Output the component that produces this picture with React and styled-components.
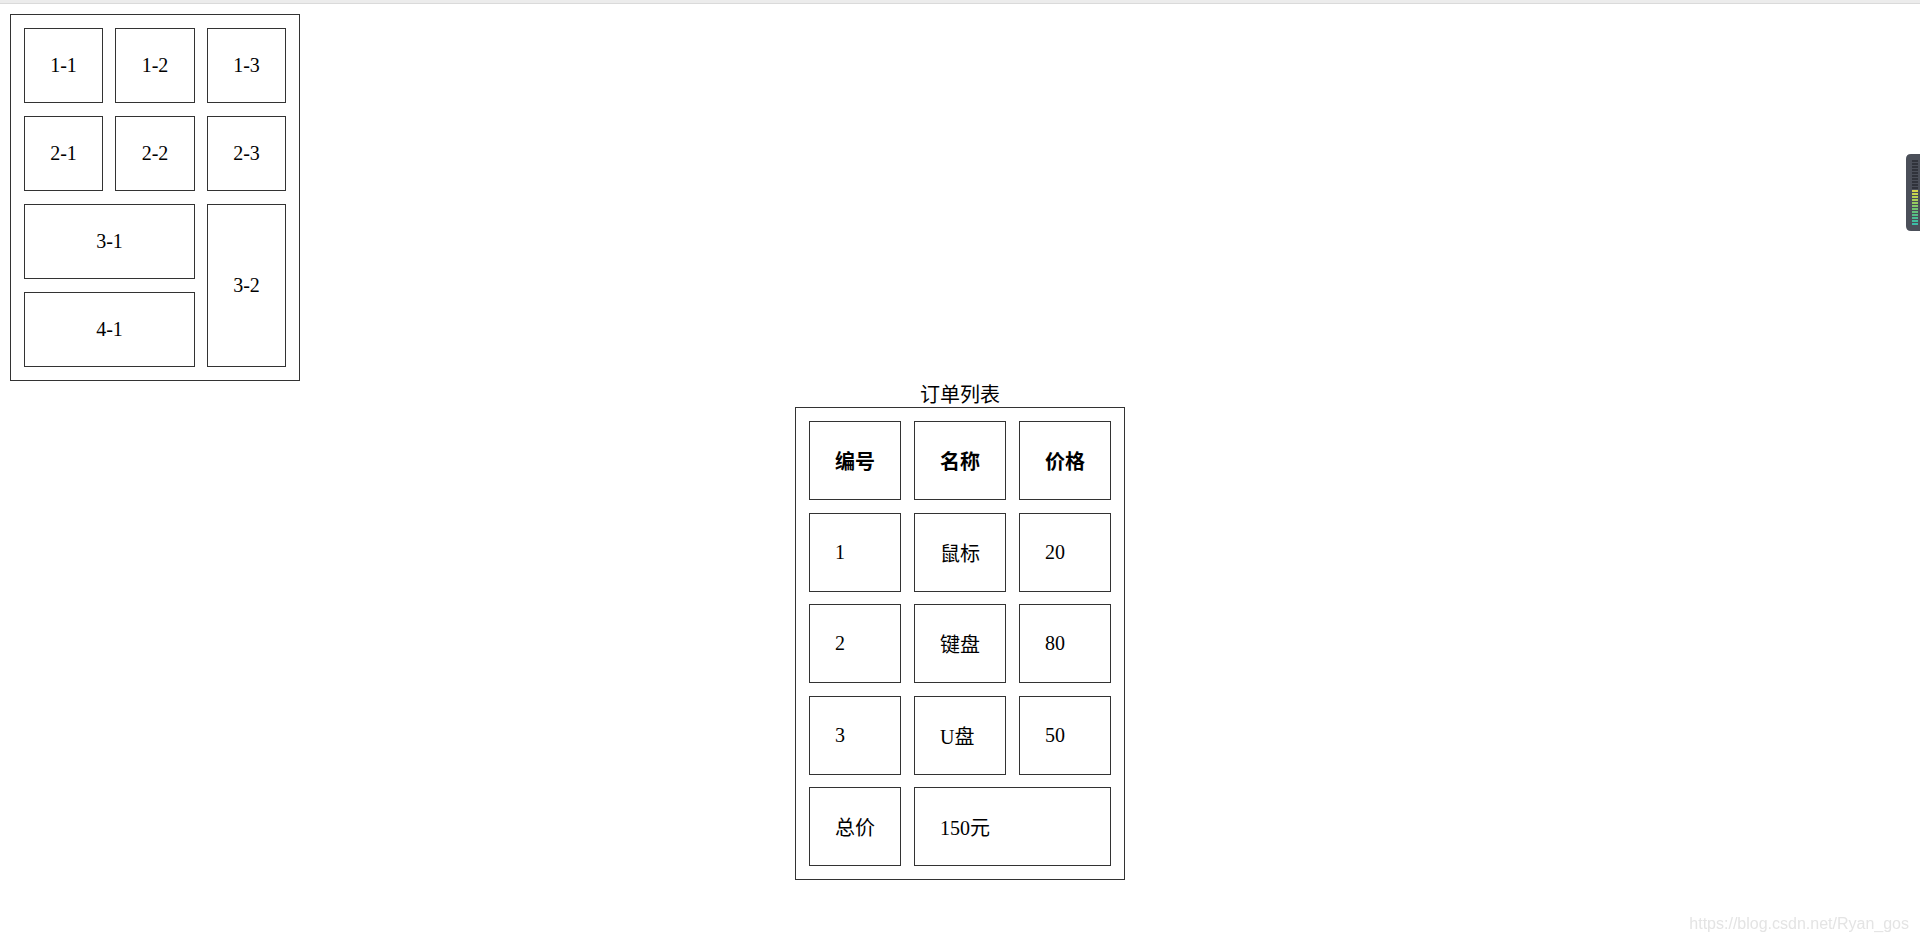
import React from 'react';
import styled, { createGlobalStyle } from 'styled-components';

const GlobalStyle = createGlobalStyle`
  html, body {
    margin: 0;
    background: #fff;
  }
  body {
    font-family: 'Liberation Serif', 'Noto Sans CJK SC', serif;
    color: #000;
  }
`;

// thin grey band left over from the browser chrome
const TopStrip = styled.div`
  height: 3px;
  background: #ececec;
  border-bottom: 1px solid #dadada;
`;

const Page = styled.div`
  padding: 10px;
`;

// first demo: cells merged across rows and columns
const LayoutTable = styled.div`
  display: grid;
  width: max-content;
  grid-template-columns: 79px 80px 79px;
  grid-auto-rows: 75px;
  gap: 13px 12px;
  padding: 13px;
  border: 1px solid #333;
`;

const LayoutCell = styled.div`
  display: flex;
  align-items: center;
  justify-content: center;
  border: 1px solid #333;
  font-size: 20px;
  grid-column: span ${(p) => p.$cols || 1};
  grid-row: span ${(p) => p.$rows || 1};
`;

// second demo: the order list
const OrderTable = styled.div`
  width: max-content;
  margin: 0 auto;
`;

const Caption = styled.div`
  text-align: center;
  font-family: 'Noto Sans CJK SC', sans-serif;
  font-size: 20px;
  line-height: 26px;
  height: 26px;
`;

const OrderGrid = styled.div`
  display: grid;
  grid-template-columns: 92px 92px 92px;
  grid-auto-rows: 79px;
  gap: 12.5px 13px;
  padding: 13px 13px 12.5px;
  border: 1px solid #333;
`;

const OrderCell = styled.div`
  display: flex;
  align-items: center;
  justify-content: ${(p) => (p.$head ? 'center' : 'flex-start')};
  padding-left: ${(p) => (p.$head ? '0' : '25px')};
  border: 1px solid #333;
  font-family: 'Liberation Serif', 'Noto Sans CJK SC', serif;
  font-size: 20px;
  font-weight: ${(p) => (p.$head ? 700 : 400)};
  grid-column: span ${(p) => p.$cols || 1};
`;

const Watermark = styled.div`
  position: fixed;
  right: 11px;
  bottom: 3px;
  font-family: 'Liberation Sans', Arial, sans-serif;
  font-size: 16px;
  color: #e4e4e4;
`;

const MeterDock = styled.div`
  position: fixed;
  top: 154px;
  right: 0;
  width: 14px;
  height: 77px;
`;

const meterColors = [
  '#d6d64a', '#c9d64e', '#b9d452', '#a8d158', '#96cd5f',
  '#84ca67', '#72c670', '#62c27b', '#55c086', '#4abe92',
  '#42bd9c', '#3cbca6',
];

const Meter = () => {
  const bars = [];
  for (let i = 0; i < 22; i++) {
    const y = 6 + i * 3;
    const fill = i < 10 ? '#30333b' : meterColors[i - 10];
    bars.push(<rect key={i} x="6" y={y} width="6" height="2" fill={fill} />);
  }
  return (
    <svg width="14" height="77" viewBox="0 0 14 77">
      <path d="M14 0 H5 Q0 0 0 5 V72 Q0 77 5 77 H14 Z" fill="#4b4f59" />
      {bars}
    </svg>
  );
};

const layoutCells = [
  { label: '1-1' }, { label: '1-2' }, { label: '1-3' },
  { label: '2-1' }, { label: '2-2' }, { label: '2-3' },
  { label: '3-1', cols: 2 }, { label: '3-2', rows: 2 },
  { label: '4-1', cols: 2 },
];

const orders = [
  { id: '1', name: '鼠标', price: '20' },
  { id: '2', name: '键盘', price: '80' },
  { id: '3', name: 'U盘', price: '50' },
];

export default function App() {
  return (
    <>
      <GlobalStyle />
      <TopStrip />
      <Page>
        <LayoutTable>
          {layoutCells.map((c) => (
            <LayoutCell key={c.label} $cols={c.cols} $rows={c.rows}>
              {c.label}
            </LayoutCell>
          ))}
        </LayoutTable>

        <OrderTable>
          <Caption>订单列表</Caption>
          <OrderGrid>
            <OrderCell $head>编号</OrderCell>
            <OrderCell $head>名称</OrderCell>
            <OrderCell $head>价格</OrderCell>
            {orders.map((o) => (
              <React.Fragment key={o.id}>
                <OrderCell>{o.id}</OrderCell>
                <OrderCell>{o.name}</OrderCell>
                <OrderCell>{o.price}</OrderCell>
              </React.Fragment>
            ))}
            <OrderCell>总价</OrderCell>
            <OrderCell $cols={2}>150元</OrderCell>
          </OrderGrid>
        </OrderTable>
      </Page>
      <MeterDock>
        <Meter />
      </MeterDock>
      <Watermark>https://blog.csdn.net/Ryan_gos</Watermark>
    </>
  );
}
